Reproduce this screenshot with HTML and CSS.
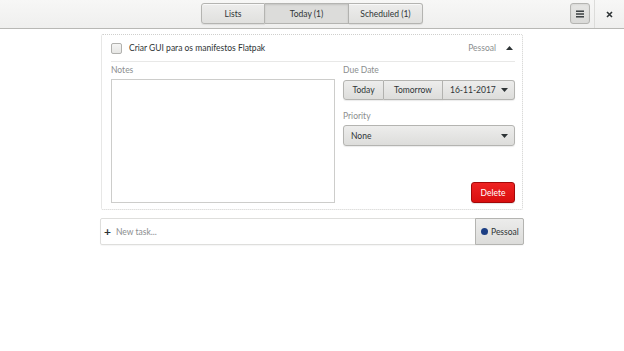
FILE: index.html
```html
<!DOCTYPE html>
<html lang="pt">
<head>
  <meta charset="UTF-8" />
  <title>To Do</title>
  <link rel="stylesheet" href="styles.css">
</head>
<body>
  <header class="headerbar">
    <div></div>
    <div class="switcher">
      <button class="sw-btn sw-lists">Lists</button>
      <button class="sw-btn sw-today active">Today (1)</button>
      <button class="sw-btn sw-sched">Scheduled (1)</button>
    </div>
    <div class="header-end">
      <button class="menu-btn">
        <svg width="8" height="8" viewBox="0 0 8 8"><rect x="0" y="0.5" width="8" height="1.4" fill="#2e3436"/><rect x="0" y="3.3" width="8" height="1.4" fill="#2e3436"/><rect x="0" y="6.1" width="8" height="1.4" fill="#2e3436"/></svg>
      </button>
      <span class="sep"></span>
      <button class="close-btn">
        <svg width="7" height="7" viewBox="0 0 7 7"><path d="M1 1 L6 6 M6 1 L1 6" stroke="#2e3436" stroke-width="1.6"/></svg>
      </button>
    </div>
  </header>

  <main class="content">
    <section class="task-card">
      <div class="task-row">
        <span class="checkbox"></span>
        <span class="task-title">Criar GUI para os manifestos Flatpak</span>
        <span class="task-list">Pessoal</span>
        <svg class="arrow" width="7" height="4" viewBox="0 0 7 4"><path d="M0 4 L3.5 0 L7 4 Z" fill="#2e3436"/></svg>
      </div>

      <div class="task-details">
        <div class="col-notes">
          <div class="label">Notes</div>
          <div class="notes-box"></div>
        </div>
        <div class="col-side">
          <div class="label">Due Date</div>
          <div class="linked">
            <button class="btn btn-today">Today</button>
            <button class="btn btn-tomorrow">Tomorrow</button>
            <button class="btn btn-date">16-11-2017
              <svg width="7" height="4" viewBox="0 0 7 4"><path d="M0 0 L3.5 4 L7 0 Z" fill="#2e3436"/></svg>
            </button>
          </div>
          <div class="label label-priority">Priority</div>
          <button class="btn combo">None
            <svg width="7" height="4" viewBox="0 0 7 4"><path d="M0 0 L3.5 4 L7 0 Z" fill="#2e3436"/></svg>
          </button>
          <div class="side-footer">
            <button class="delete-btn">Delete</button>
          </div>
        </div>
      </div>
    </section>

    <div class="new-task">
      <span class="plus">+</span>
      <span class="new-placeholder">New task...</span>
      <button class="list-btn"><span class="dot"></span>Pessoal</button>
    </div>
  </main>
</body>
</html>
```

FILE: styles.css
```css
* {
  margin: 0;
  padding: 0;
  box-sizing: border-box;
  font-family: 'Lato', 'Noto Sans', sans-serif;
}

body {
  background-color: #ffffff;
  color: #2e3436;
  font-size: 8.5px;
  width: 624px;
  height: 351px;
  overflow: hidden;
}

button {
  font-family: inherit;
  font-size: inherit;
  color: #2e3436;
  cursor: pointer;
}

.headerbar {
  height: 29px;
  background: linear-gradient(#f7f7f6, #efefee);
  border-bottom: 1px solid #b8b8b5;
  display: grid;
  grid-template-columns: 1fr auto 1fr;
  align-items: center;
}

.switcher {
  display: flex;
  height: 21px;
  margin-top: -1px;
}

.sw-btn {
  background: linear-gradient(#ededec, #e0e0de);
  border: 1px solid #b4b4b1;
  border-left: none;
  box-shadow: inset 0 1px #f8f8f8, 0 1px 1px rgba(0, 0, 0, 0.08);
  color: #2e3436;
}

.sw-lists {
  width: 64px;
  border-left: 1px solid #b4b4b1;
  border-radius: 3px 0 0 3px;
}

.sw-today {
  width: 84px;
}

.sw-sched {
  width: 74px;
  border-radius: 0 3px 3px 0;
}

.sw-btn.active {
  background: #dcdcda;
  box-shadow: inset 0 1px 2px rgba(0, 0, 0, 0.12);
}

.header-end {
  display: flex;
  justify-content: flex-end;
  align-items: center;
  height: 100%;
}

.menu-btn {
  width: 20px;
  height: 21px;
  margin-top: -1px;
  background: linear-gradient(#e6e6e4, #dadad8);
  border: 1px solid #b4b4b1;
  border-radius: 3px;
  box-shadow: inset 0 1px 2px rgba(0, 0, 0, 0.06);
  display: flex;
  align-items: center;
  justify-content: center;
}

.sep {
  width: 1px;
  height: 100%;
  background: #dcdcda;
  margin: 0 9px 0 4px;
}

.close-btn {
  width: 10px;
  height: 20px;
  background: none;
  border: none;
  margin-right: 10px;
  display: flex;
  align-items: center;
  justify-content: center;
}

.content {
  width: 424px;
  margin: 5px auto 0;
}

.task-card {
  margin: 0 1px;
  border: 1px dotted #cfcfcd;
  border-radius: 2px;
  padding: 0 7px 6px 9px;
  background: #ffffff;
}

.task-row {
  display: flex;
  align-items: center;
  height: 27px;
  border-bottom: 1px solid #e8e8e7;
}

.checkbox {
  width: 11px;
  height: 11px;
  border: 1px solid #b1b1ae;
  border-radius: 2px;
  background: linear-gradient(#f5f5f4, #e6e6e4);
  margin-right: 7px;
}

.task-title {
  flex: 1;
  color: #2e3436;
}

.task-list {
  color: #8b8e8f;
  margin-right: 10px;
}

.arrow {
  margin-right: 2px;
}

.task-details {
  display: flex;
  gap: 8px;
  padding-top: 2px;
}

.label {
  color: #8b8e8f;
  height: 13px;
  line-height: 13px;
  margin-bottom: 2px;
}

.col-notes {
  width: 224px;
}

.notes-box {
  height: 124px;
  border: 1px solid #cdcdcb;
  background: #ffffff;
}

.col-side {
  flex: 1;
  display: flex;
  flex-direction: column;
}

.linked {
  display: flex;
  height: 20px;
  margin-top: 1px;
}

.btn {
  background: linear-gradient(#ededec, #dddddb);
  border: 1px solid #b4b4b1;
  box-shadow: 0 1px 1px rgba(0, 0, 0, 0.08);
  height: 20px;
}

.btn-today {
  width: 41px;
  border-radius: 3px 0 0 3px;
}

.btn-tomorrow {
  width: 59px;
  border-left: none;
}

.btn-date {
  flex: 1;
  border-left: none;
  border-radius: 0 3px 3px 0;
  display: flex;
  align-items: center;
  justify-content: space-between;
  padding: 0 6px 0 7px;
}

.label-priority {
  margin-top: 10px;
  margin-bottom: 2px;
}

.combo {
  height: 21px;
  border-radius: 3px;
  display: flex;
  align-items: center;
  justify-content: space-between;
  padding: 0 6px 0 7px;
}

.side-footer {
  flex: 1;
  display: flex;
  align-items: flex-end;
  justify-content: flex-end;
}

.delete-btn {
  width: 44px;
  height: 21px;
  background: linear-gradient(#ee2222, #d90f0f);
  border: 1px solid #a30808;
  border-radius: 3px;
  color: #ffffff;
  box-shadow: 0 1px 1px rgba(0, 0, 0, 0.1);
}

.new-task {
  margin-top: 8px;
  height: 27px;
  border: 1px solid #dededc;
  border-radius: 2px;
  display: flex;
  align-items: center;
  padding-left: 3px;
  box-shadow: 0 1px 1px rgba(0, 0, 0, 0.04);
}

.plus {
  font-size: 12px;
  font-weight: bold;
  color: #2e3436;
  margin-right: 5px;
  line-height: 1;
}

.new-placeholder {
  flex: 1;
  color: #8b8e8f;
}

.list-btn {
  height: 27px;
  margin: -1px -1px -1px 0;
  width: 49px;
  background: linear-gradient(#ececeb, #dcdcda);
  border: 1px solid #b4b4b1;
  border-radius: 0 2px 2px 0;
  display: flex;
  align-items: center;
  padding-left: 5px;
  gap: 3px;
}

.dot {
  width: 7px;
  height: 7px;
  border-radius: 50%;
  background: #1c3f84;
}
```
